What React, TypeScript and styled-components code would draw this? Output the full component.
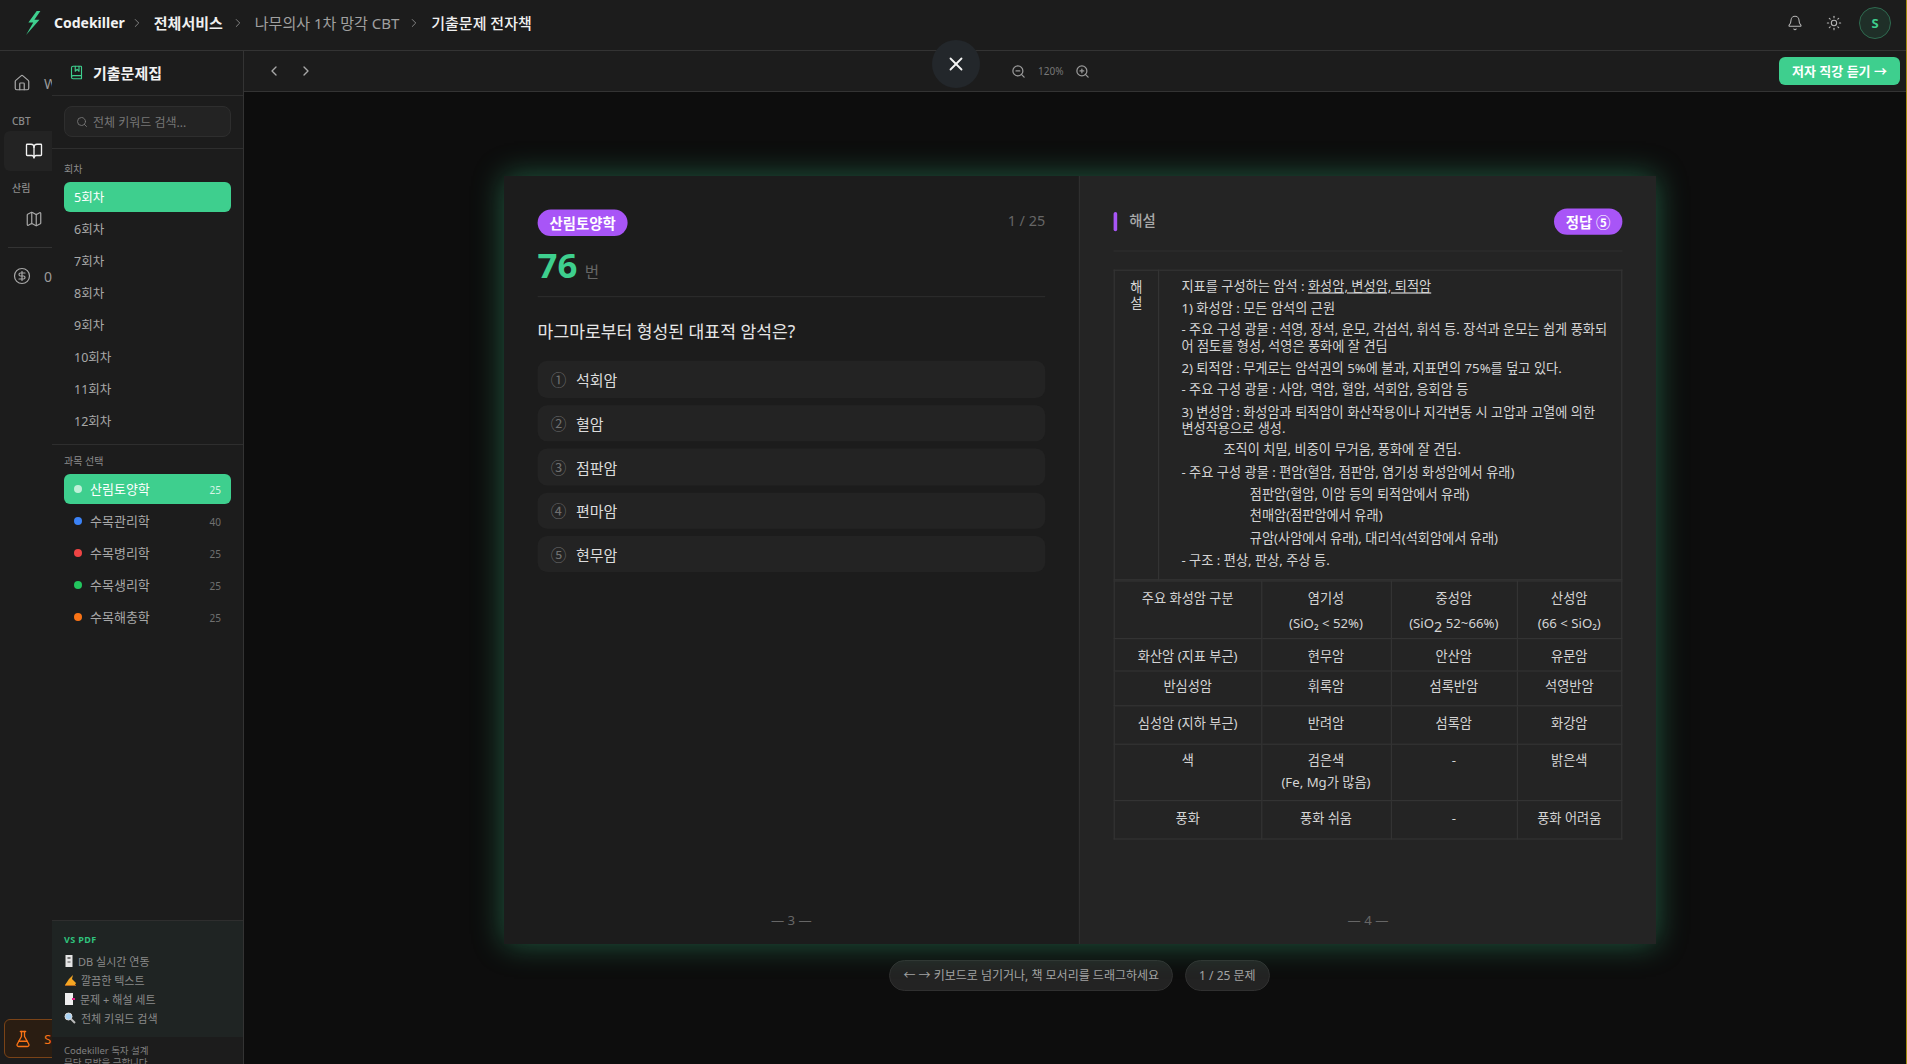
import styled, { createGlobalStyle } from "styled-components";
import {
  Bell,
  BookMarked,
  BookOpen,
  ChevronLeft,
  ChevronRight,
  CircleDollarSign,
  FlaskConical,
  Home,
  Map as MapIcon,
  Search,
  Sun,
  X,
  ZoomIn,
  ZoomOut,
} from "lucide-react";

const GREEN = "#3ecf8e";
const PURPLE = "#a855f7";

const rounds = ["5회차", "6회차", "7회차", "8회차", "9회차", "10회차", "11회차", "12회차"];

const subjects = [
  { name: "산림토양학", count: 25, color: "#bff0d8" },
  { name: "수목관리학", count: 40, color: "#3b82f6" },
  { name: "수목병리학", count: 25, color: "#ef4444" },
  { name: "수목생리학", count: 25, color: "#22c55e" },
  { name: "수목해충학", count: 25, color: "#f97316" },
];

const choices = ["석회암", "혈암", "점판암", "편마암", "현무암"];
const marks = ["①", "②", "③", "④", "⑤"];

function App() {
  return (
    <>
      <GlobalStyle />
      <Screen>
        <TopBar>
          <Bolt viewBox="0 0 17 26">
            <path d="M12.5 0 L3.5 12.5 L8.8 12.5 L1 26 L15.5 9.5 L10 9.5 L16.5 0 Z" fill={GREEN} />
          </Bolt>
          <Brand>Codekiller</Brand>
          <Sep />
          <Crumb $tone="strong">전체서비스</Crumb>
          <Sep />
          <Crumb $tone="muted">나무의사 1차 망각 CBT</Crumb>
          <Sep />
          <Crumb $tone="plain">기출문제 전자책</Crumb>
          <TopActions>
            <Bell size={16} color="#b5b5b5" strokeWidth={1.6} />
            <Sun size={16} color="#b5b5b5" strokeWidth={1.6} />
            <Avatar>S</Avatar>
          </TopActions>
        </TopBar>

        <Body>
          <Rail>
            <RailRow>
              <Home size={18} color="#a8a8a8" strokeWidth={1.6} />
              <RailText>W</RailText>
            </RailRow>
            <RailLabel $top={19}>CBT</RailLabel>
            <RailActive>
              <BookOpen size={18} color="#f2f2f2" strokeWidth={1.8} />
            </RailActive>
            <RailLabel $top={10}>산림</RailLabel>
            <RailIconRow>
              <MapIcon size={18} color="#a8a8a8" strokeWidth={1.6} />
            </RailIconRow>
            <RailDivider />
            <RailRow>
              <CircleDollarSign size={18} color="#a8a8a8" strokeWidth={1.6} />
              <RailText>0</RailText>
            </RailRow>
            <RailFlask>
              <FlaskConical size={18} color="#f97316" strokeWidth={1.8} />
              <FlaskText>S</FlaskText>
            </RailFlask>
          </Rail>

          <Sidebar>
            <SideTitle>
              <BookMarked size={15} color={GREEN} strokeWidth={1.8} />
              기출문제집
            </SideTitle>
            <SearchArea>
              <SearchBox>
                <Search size={12} color="#777" strokeWidth={1.8} />
                전체 키워드 검색...
              </SearchBox>
            </SearchArea>
            <RoundArea>
              <SectionLabel>회차</SectionLabel>
              {rounds.map((round, i) => (
                <RoundItem key={round} $active={i === 0}>
                  {round}
                </RoundItem>
              ))}
            </RoundArea>
            <SubjectArea>
              <SectionLabel>과목 선택</SectionLabel>
              {subjects.map((subject, i) => (
                <SubjectItem key={subject.name} $active={i === 0}>
                  <Dot $color={subject.color} />
                  <SubjectName>{subject.name}</SubjectName>
                  <SubjectCount $active={i === 0}>{subject.count}</SubjectCount>
                </SubjectItem>
              ))}
            </SubjectArea>
            <VsBox>
              <VsTitle>VS PDF</VsTitle>
              <VsLine>
                <MiniIcon $w={11} viewBox="0 0 10 12" preserveAspectRatio="xMinYMid">
                  <rect x="1.5" y="0" width="7" height="12" fill="#e5e5e5" />
                  <rect x="3.5" y="2" width="3" height="2" fill="#777" />
                  <rect x="3.5" y="6" width="3" height="2" fill="#999" />
                </MiniIcon>
                DB 실시간 연동
              </VsLine>
              <VsLine>
                <MiniIcon $w={14} viewBox="0 0 12 12" preserveAspectRatio="xMinYMid">
                  <path d="M1 11 L5 5 L9 1 L8 5 L12 9 L11 11 Z" fill="#f5a623" />
                  <path d="M1 11 L12 11 L12 12 L1 12 Z" fill="#b5651d" />
                </MiniIcon>
                깔끔한 텍스트
              </VsLine>
              <VsLine>
                <MiniIcon $w={13} viewBox="0 0 11 12" preserveAspectRatio="xMinYMid">
                  <rect x="1" y="0" width="8" height="12" fill="#eee" />
                  <rect x="8" y="5" width="3" height="2" fill="#e91e8c" />
                </MiniIcon>
                문제 + 해설 세트
              </VsLine>
              <VsLine>
                <MiniIcon $w={14} viewBox="0 0 12 12" preserveAspectRatio="xMinYMid">
                  <circle cx="4.5" cy="4.5" r="3.5" fill="#a9d4f5" stroke="#ddd" />
                  <path d="M7 7 L11 11" stroke="#bbb" strokeWidth="2" />
                </MiniIcon>
                전체 키워드 검색
              </VsLine>
            </VsBox>
            <SideFooter>
              Codekiller 독자 설계
              <br />
              무단 모방을 금합니다
            </SideFooter>
          </Sidebar>

          <Main>
            <ToolBar>
              <ToolNav>
                <ChevronLeft size={16} color="#a8a8a8" />
                <ChevronRight size={16} color="#a8a8a8" />
              </ToolNav>
              <CloseButton>
                <X size={22} color="#f5f5f5" />
              </CloseButton>
              <ZoomTools>
                <ZoomOut size={15} color="#999" />
                <ZoomValue>120%</ZoomValue>
                <ZoomIn size={15} color="#999" />
              </ZoomTools>
              <ListenButton>저자 직강 듣기 →</ListenButton>
            </ToolBar>

            <Stage>
              <BookFrame>
                <Book>
                  <LeftPage>
                    <QuestionHead>
                      <SubjectBadge>산림토양학</SubjectBadge>
                      <Progress>1 / 25</Progress>
                    </QuestionHead>
                    <NumberRow>
                      <BigNumber>76</BigNumber>
                      <NumberUnit>번</NumberUnit>
                    </NumberRow>
                    <Question>마그마로부터 형성된 대표적 암석은?</Question>
                    <Choices>
                      {choices.map((choice, i) => (
                        <Choice key={choice}>
                          <ChoiceMark>{marks[i]}</ChoiceMark>
                          {choice}
                        </Choice>
                      ))}
                    </Choices>
                    <PageNumber>— 3 —</PageNumber>
                  </LeftPage>

                  <RightPage>
                    <AnswerHead>
                      <AccentBar />
                      <AnswerTitle>해설</AnswerTitle>
                      <AnswerBadge>정답 ⑤</AnswerBadge>
                    </AnswerHead>
                    <ExplainTable>
                      <tbody>
                        <tr>
                          <ExplainHead>해설</ExplainHead>
                          <ExplainCell>
                            <P>
                              지표를 구성하는 암석 : <U>화성암, 변성암, 퇴적암</U>
                            </P>
                            <P>1) 화성암 : 모든 암석의 근원</P>
                            <P>
                              - 주요 구성 광물 : 석영, 장석, 운모, 각섬석, 휘석 등. 장석과 운모는 쉽게 풍화되어 점토를 형성, 석영은 풍화에 잘 견딤
                            </P>
                            <P>2) 퇴적암 : 무게로는 암석권의 5%에 불과, 지표면의 75%를 덮고 있다.</P>
                            <P>- 주요 구성 광물 : 사암, 역암, 혈암, 석회암, 응회암 등</P>
                            <P>
                              3) 변성암 : 화성암과 퇴적암이 화산작용이나 지각변동 시 고압과 고열에 의한 변성작용으로 생성.
                            </P>
                            <P $indent={35}>조직이 치밀, 비중이 무거움, 풍화에 잘 견딤.</P>
                            <P>- 주요 구성 광물 : 편암(혈암, 점판암, 염기성 화성암에서 유래)</P>
                            <P $indent={57}>점판암(혈암, 이암 등의 퇴적암에서 유래)</P>
                            <P $indent={57}>천매암(점판암에서 유래)</P>
                            <P $indent={57}>규암(사암에서 유래), 대리석(석회암에서 유래)</P>
                            <P>- 구조 : 편상, 판상, 주상 등.</P>
                          </ExplainCell>
                        </tr>
                      </tbody>
                    </ExplainTable>
                    <RockTable>
                      <colgroup>
                        <col style={{ width: 122.5 }} />
                        <col style={{ width: 108 }} />
                        <col style={{ width: 105 }} />
                        <col />
                      </colgroup>
                      <tbody>
                        <RockRow $h={48} $pad={7}>
                          <RockCell>주요 화성암 구분</RockCell>
                          <RockCell>
                            염기성
                            <RockSecond $gap={7}>(SiO₂ &lt; 52%)</RockSecond>
                          </RockCell>
                          <RockCell>
                            중성암
                            <RockSecond $gap={7}>
                              (SiO<Sub>2</Sub> 52~66%)
                            </RockSecond>
                          </RockCell>
                          <RockCell>
                            산성암
                            <RockSecond $gap={7}>(66 &lt; SiO₂)</RockSecond>
                          </RockCell>
                        </RockRow>
                        <RockRow $h={27} $pad={7}>
                          <RockCell>화산암 (지표 부근)</RockCell>
                          <RockCell>현무암</RockCell>
                          <RockCell>안산암</RockCell>
                          <RockCell>유문암</RockCell>
                        </RockRow>
                        <RockRow $h={29} $pad={4.5}>
                          <RockCell>반심성암</RockCell>
                          <RockCell>휘록암</RockCell>
                          <RockCell>섬록반암</RockCell>
                          <RockCell>석영반암</RockCell>
                        </RockRow>
                        <RockRow $h={32} $pad={6.5}>
                          <RockCell>심성암 (지하 부근)</RockCell>
                          <RockCell>반려암</RockCell>
                          <RockCell>섬록암</RockCell>
                          <RockCell>화강암</RockCell>
                        </RockRow>
                        <RockRow $h={47} $pad={5.5}>
                          <RockCell>색</RockCell>
                          <RockCell>
                            검은색
                            <RockSecond $gap={5}>(Fe, Mg가 많음)</RockSecond>
                          </RockCell>
                          <RockCell>-</RockCell>
                          <RockCell>밝은색</RockCell>
                        </RockRow>
                        <RockRow $h={32} $pad={6.5}>
                          <RockCell>풍화</RockCell>
                          <RockCell>풍화 쉬움</RockCell>
                          <RockCell>-</RockCell>
                          <RockCell>풍화 어려움</RockCell>
                        </RockRow>
                      </tbody>
                    </RockTable>
                    <PageNumber>— 4 —</PageNumber>
                  </RightPage>
                </Book>
              </BookFrame>
              <HintRow>
                <Hint>← → 키보드로 넘기거나, 책 모서리를 드래그하세요</Hint>
                <Hint>1 / 25 문제</Hint>
              </HintRow>
            </Stage>
          </Main>
        </Body>
      </Screen>
    </>
  );
}

const GlobalStyle = createGlobalStyle`
  * {
    box-sizing: border-box;
  }
  body {
    margin: 0;
    background: #0d0d0d;
    font-family: "Noto Sans", "Noto Sans CJK KR", sans-serif;
  }
`;

const Screen = styled.div`
  width: 1907px;
  height: 1064px;
  display: flex;
  flex-direction: column;
  overflow: hidden;
  background: #1c1c1c;
  border-right: 1px solid #a08a10;
`;

const TopBar = styled.header`
  height: 51px;
  flex: none;
  display: flex;
  align-items: center;
  padding: 0 15px 5px 25px;
  background: #1c1c1c;
  border-bottom: 1px solid #333;
`;

const Bolt = styled.svg`
  width: 16px;
  height: 24px;
  margin-right: 13px;
`;

const Brand = styled.span`
  font-size: 14px;
  font-weight: 700;
  color: #f2f2f2;
  margin-right: -3px;
`;

const Sep = styled(ChevronRight).attrs({ size: 14, strokeWidth: 1.6 })`
  color: #888;
  margin: 0 10px 0 8px;
`;

const Crumb = styled.span<{ $tone: "strong" | "muted" | "plain" }>`
  font-size: 15px;
  font-weight: ${({ $tone }) => ($tone === "strong" ? 700 : $tone === "plain" ? 500 : 400)};
  color: ${({ $tone }) => ($tone === "muted" ? "#a0a0a0" : "#f0f0f0")};
`;

const TopActions = styled.div`
  margin-left: auto;
  display: flex;
  align-items: center;
  gap: 23px;
`;

const Avatar = styled.div`
  width: 32px;
  height: 32px;
  border-radius: 50%;
  display: flex;
  align-items: center;
  justify-content: center;
  margin-left: -6px;
  font-size: 13px;
  font-weight: 700;
  color: ${GREEN};
  background: #1f2f28;
  border: 1px solid #2f6b50;
`;

const Body = styled.div`
  flex: 1;
  min-height: 0;
  display: flex;
`;

const Rail = styled.nav`
  width: 52px;
  flex: none;
  display: flex;
  flex-direction: column;
  overflow: hidden;
  padding: 20px 0 0 4px;
`;

const RailRow = styled.div`
  display: flex;
  align-items: center;
  gap: 13px;
  height: 24px;
  padding-left: 9px;
  width: 80px;
  flex: none;
`;

const RailText = styled.span`
  font-size: 14px;
  color: #9a9a9a;
`;

const RailLabel = styled.div<{ $top: number }>`
  font-size: 10px;
  font-weight: 500;
  color: #8c8c8c;
  padding-left: 8px;
  margin-top: ${({ $top }) => $top}px;
  line-height: 14px;
`;

const RailActive = styled.div`
  height: 40px;
  flex: none;
  margin-top: 3px;
  display: flex;
  align-items: center;
  justify-content: center;
  padding-left: 12px;
  background: #232323;
  border-radius: 6px 0 0 6px;
`;

const RailIconRow = styled.div`
  height: 40px;
  flex: none;
  display: flex;
  align-items: center;
  justify-content: center;
  padding-left: 12px;
  margin-top: 4px;
`;

const RailDivider = styled.div`
  height: 1px;
  flex: none;
  margin: 8px 0 16px 4px;
  background: #333;
`;

const RailFlask = styled.div`
  margin-top: auto;
  margin-bottom: 6px;
  height: 39px;
  width: 80px;
  flex: none;
  display: flex;
  align-items: center;
  gap: 12px;
  padding-left: 9px;
  border-radius: 6px;
  background: #2a1d12;
  border: 1px solid #7a4317;
`;

const FlaskText = styled.span`
  font-size: 13px;
  color: #f97316;
`;

const Sidebar = styled.aside`
  width: 192px;
  flex: none;
  display: flex;
  flex-direction: column;
  min-height: 0;
  background: #1c1c1c;
  border-right: 1px solid #333;
`;

const SideTitle = styled.div`
  height: 45px;
  flex: none;
  display: flex;
  align-items: center;
  gap: 9px;
  padding: 0 0 2px 17px;
  font-size: 15px;
  font-weight: 700;
  color: #f2f2f2;
  border-bottom: 1px solid #2e2e2e;
`;

const SearchArea = styled.div`
  flex: none;
  height: 53px;
  padding: 10px 12px;
  border-bottom: 1px solid #2e2e2e;
`;

const SearchBox = styled.div`
  height: 31px;
  display: flex;
  align-items: center;
  gap: 5px;
  padding-left: 11px;
  font-size: 12px;
  color: #777;
  background: #232323;
  border: 1px solid #2e2e2e;
  border-radius: 8px;
`;

const RoundArea = styled.div`
  flex: none;
  height: 296px;
  padding: 13px 12px 0;
  border-bottom: 1px solid #2e2e2e;
`;

const SectionLabel = styled.div`
  font-size: 10px;
  line-height: 15px;
  color: #8c8c8c;
  margin-bottom: 5px;
`;

const RoundItem = styled.div<{ $active?: boolean }>`
  height: 30px;
  margin-bottom: 2px;
  display: flex;
  align-items: center;
  padding: 0 0 1px 10px;
  font-size: 12.5px;
  border-radius: 6px;
  color: ${({ $active }) => ($active ? "#fff" : "#a8a8a8")};
  background: ${({ $active }) => ($active ? GREEN : "transparent")};
`;

const SubjectArea = styled.div`
  flex: 1;
  padding: 9px 12px 0;
`;

const SubjectItem = styled(RoundItem)`
  gap: 8px;
  padding: 0 10px 1px;
  font-size: 13px;
`;

const Dot = styled.span<{ $color: string }>`
  width: 8px;
  height: 8px;
  flex: none;
  border-radius: 50%;
  background: ${({ $color }) => $color};
`;

const SubjectName = styled.span`
  flex: 1;
`;

const SubjectCount = styled.span<{ $active?: boolean }>`
  font-size: 10px;
  margin-top: 3px;
  color: ${({ $active }) => ($active ? "#d8f5e7" : "#707070")};
`;

const VsBox = styled.div`
  flex: none;
  height: 117px;
  padding: 12px 12px 0;
  background: #1f2423;
  border-top: 1px solid #2e2e2e;
`;

const VsTitle = styled.div`
  font-size: 9px;
  line-height: 14px;
  font-weight: 700;
  letter-spacing: 0.4px;
  color: #2fc27d;
  margin-bottom: 4px;
`;

const VsLine = styled.div`
  display: flex;
  align-items: center;
  gap: 3px;
  height: 19px;
  font-size: 11px;
  color: #8a8a8a;
`;

const MiniIcon = styled.svg<{ $w: number }>`
  width: ${({ $w }) => $w}px;
  height: 12px;
  flex: none;
`;

const SideFooter = styled.div`
  flex: none;
  height: 27px;
  overflow: hidden;
  padding: 8px 12px 0;
  font-size: 9.5px;
  line-height: 12px;
  color: #808080;
`;

const Main = styled.main`
  flex: 1;
  min-width: 0;
  display: flex;
  flex-direction: column;
`;

const ToolBar = styled.div`
  position: relative;
  height: 41px;
  flex: none;
  display: flex;
  align-items: center;
  padding: 0 6px 0 22px;
  border-bottom: 1px solid #333;
`;

const ToolNav = styled.div`
  display: flex;
  gap: 16px;
`;

const CloseButton = styled.div`
  position: absolute;
  left: 688px;
  top: -11px;
  width: 48px;
  height: 48px;
  border-radius: 50%;
  display: flex;
  align-items: center;
  justify-content: center;
  background: #23272b;
`;

const ZoomTools = styled.div`
  display: flex;
  align-items: center;
  gap: 12px;
  margin-left: 697px;
`;

const ZoomValue = styled.span`
  font-size: 10px;
  color: #777;
`;

const ListenButton = styled.div`
  margin-left: auto;
  height: 28px;
  width: 121px;
  display: flex;
  align-items: center;
  justify-content: center;
  padding-bottom: 1px;
  font-size: 13px;
  font-weight: 600;
  color: #fff;
  background: ${GREEN};
  border-radius: 6px;
`;

const Stage = styled.div`
  flex: 1;
  display: flex;
  flex-direction: column;
  align-items: center;
  padding: 84px 0 0 9px;
  background: #0d0d0d;
`;

const BookFrame = styled.div`
  width: 1152px;
  height: 768px;
  flex: none;
`;

const Book = styled.div`
  width: 960px;
  height: 640px;
  display: flex;
  transform: scale(1.2);
  transform-origin: top left;
  box-shadow: 0 0 24px rgba(62, 207, 142, 0.4);
`;

const LeftPage = styled.section`
  width: 480px;
  display: flex;
  flex-direction: column;
  padding: 28px 28px 13.5px;
  background: #1c1c1c;
  border-right: 1px solid #2e2e2e;
`;

const QuestionHead = styled.div`
  display: flex;
  align-items: center;
  justify-content: space-between;
`;

const SubjectBadge = styled.span`
  height: 21.6px;
  padding: 0 10px;
  display: flex;
  align-items: center;
  font-size: 12px;
  font-weight: 700;
  color: #fff;
  background: ${PURPLE};
  border-radius: 11px;
`;

const Progress = styled.span`
  font-size: 12px;
  padding-bottom: 2px;
  color: #666;
`;

const NumberRow = styled.div`
  display: flex;
  align-items: baseline;
  gap: 6px;
  margin-top: 5px;
  padding-bottom: 7px;
  border-bottom: 1px solid #2a2a2a;
`;

const BigNumber = styled.span`
  font-size: 29px;
  line-height: 38px;
  font-weight: 700;
  color: ${GREEN};
`;

const NumberUnit = styled.span`
  font-size: 13px;
  color: #666;
`;

const Question = styled.div`
  margin-top: 19.7px;
  font-size: 14.3px;
  line-height: 20px;
  color: #e6e6e6;
`;

const Choices = styled.div`
  display: flex;
  flex-direction: column;
  gap: 6px;
  margin-top: 14.2px;
`;

const Choice = styled.div`
  height: 30.4px;
  display: flex;
  align-items: center;
  padding-left: 11px;
  font-size: 12.5px;
  color: #dcdcdc;
  background: #232323;
  border-radius: 8px;
`;

const ChoiceMark = styled.span`
  width: 21px;
  font-size: 13px;
  color: #707070;
`;

const PageNumber = styled.div`
  margin-top: auto;
  text-align: center;
  font-size: 11px;
  line-height: 14px;
  color: #666;
`;

const RightPage = styled.section`
  width: 480px;
  display: flex;
  flex-direction: column;
  padding: 28px 28px 13.5px;
  background: #242424;
`;

const AnswerHead = styled.div`
  display: flex;
  align-items: center;
  gap: 10px;
  height: 30px;
  padding-bottom: 9px;
  box-sizing: content-box;
  border-bottom: 1px solid #2e2e2e;
  margin-top: -5px;
  margin-bottom: 15px;
`;

const AccentBar = styled.span`
  width: 3px;
  height: 16px;
  border-radius: 2px;
  background: ${PURPLE};
`;

const AnswerTitle = styled.span`
  font-size: 12px;
  font-weight: 500;
  padding-bottom: 2px;
  color: #a8a8a8;
`;

const AnswerBadge = styled(SubjectBadge)`
  margin-left: auto;
  font-weight: 600;
`;

const ExplainTable = styled.table`
  width: 100%;
  border-collapse: collapse;
  table-layout: fixed;
  font-size: 11px;
  color: #d4d4d4;
`;

const ExplainHead = styled.td`
  width: 37px;
  padding: 6.5px 11px 0;
  vertical-align: top;
  text-align: center;
  line-height: 13.33px;
  border: 1px solid #333;
`;

const ExplainCell = styled.td`
  padding: 5.7px 9.5px 10px 18.5px;
  line-height: 13.33px;
  word-break: break-all;
  border: 1px solid #333;
`;

const P = styled.p<{ $indent?: number }>`
  margin: 0 0 5px;
  padding-left: ${({ $indent }) => $indent ?? 0}px;
  &:last-child {
    margin-bottom: 0;
  }
`;

const U = styled.span`
  text-decoration: underline;
`;

const RockTable = styled.table`
  width: 100%;
  border-collapse: collapse;
  table-layout: fixed;
  font-size: 11px;
  color: #d4d4d4;
`;

const RockCell = styled.td`
  padding: 7px 4px 0;
  vertical-align: top;
  text-align: center;
  line-height: 13.33px;
  border: 1px solid #333;
`;

const RockRow = styled.tr<{ $h: number; $pad: number }>`
  height: ${({ $h }) => $h}px;
  ${RockCell} {
    padding-top: ${({ $pad }) => $pad}px;
  }
`;

const RockSecond = styled.div<{ $gap: number }>`
  margin-top: ${({ $gap }) => $gap}px;
`;

const Sub = styled.sub`
  font-size: 12px;
  line-height: 0;
`;

const HintRow = styled.div`
  display: flex;
  gap: 12px;
  margin-top: 16px;
`;

const Hint = styled.div`
  height: 31px;
  display: flex;
  align-items: center;
  padding: 0 13px 1px;
  font-size: 12px;
  color: #a3a3a3;
  background: #232323;
  border: 1px solid #303030;
  border-radius: 16px;
`;

export default App;
